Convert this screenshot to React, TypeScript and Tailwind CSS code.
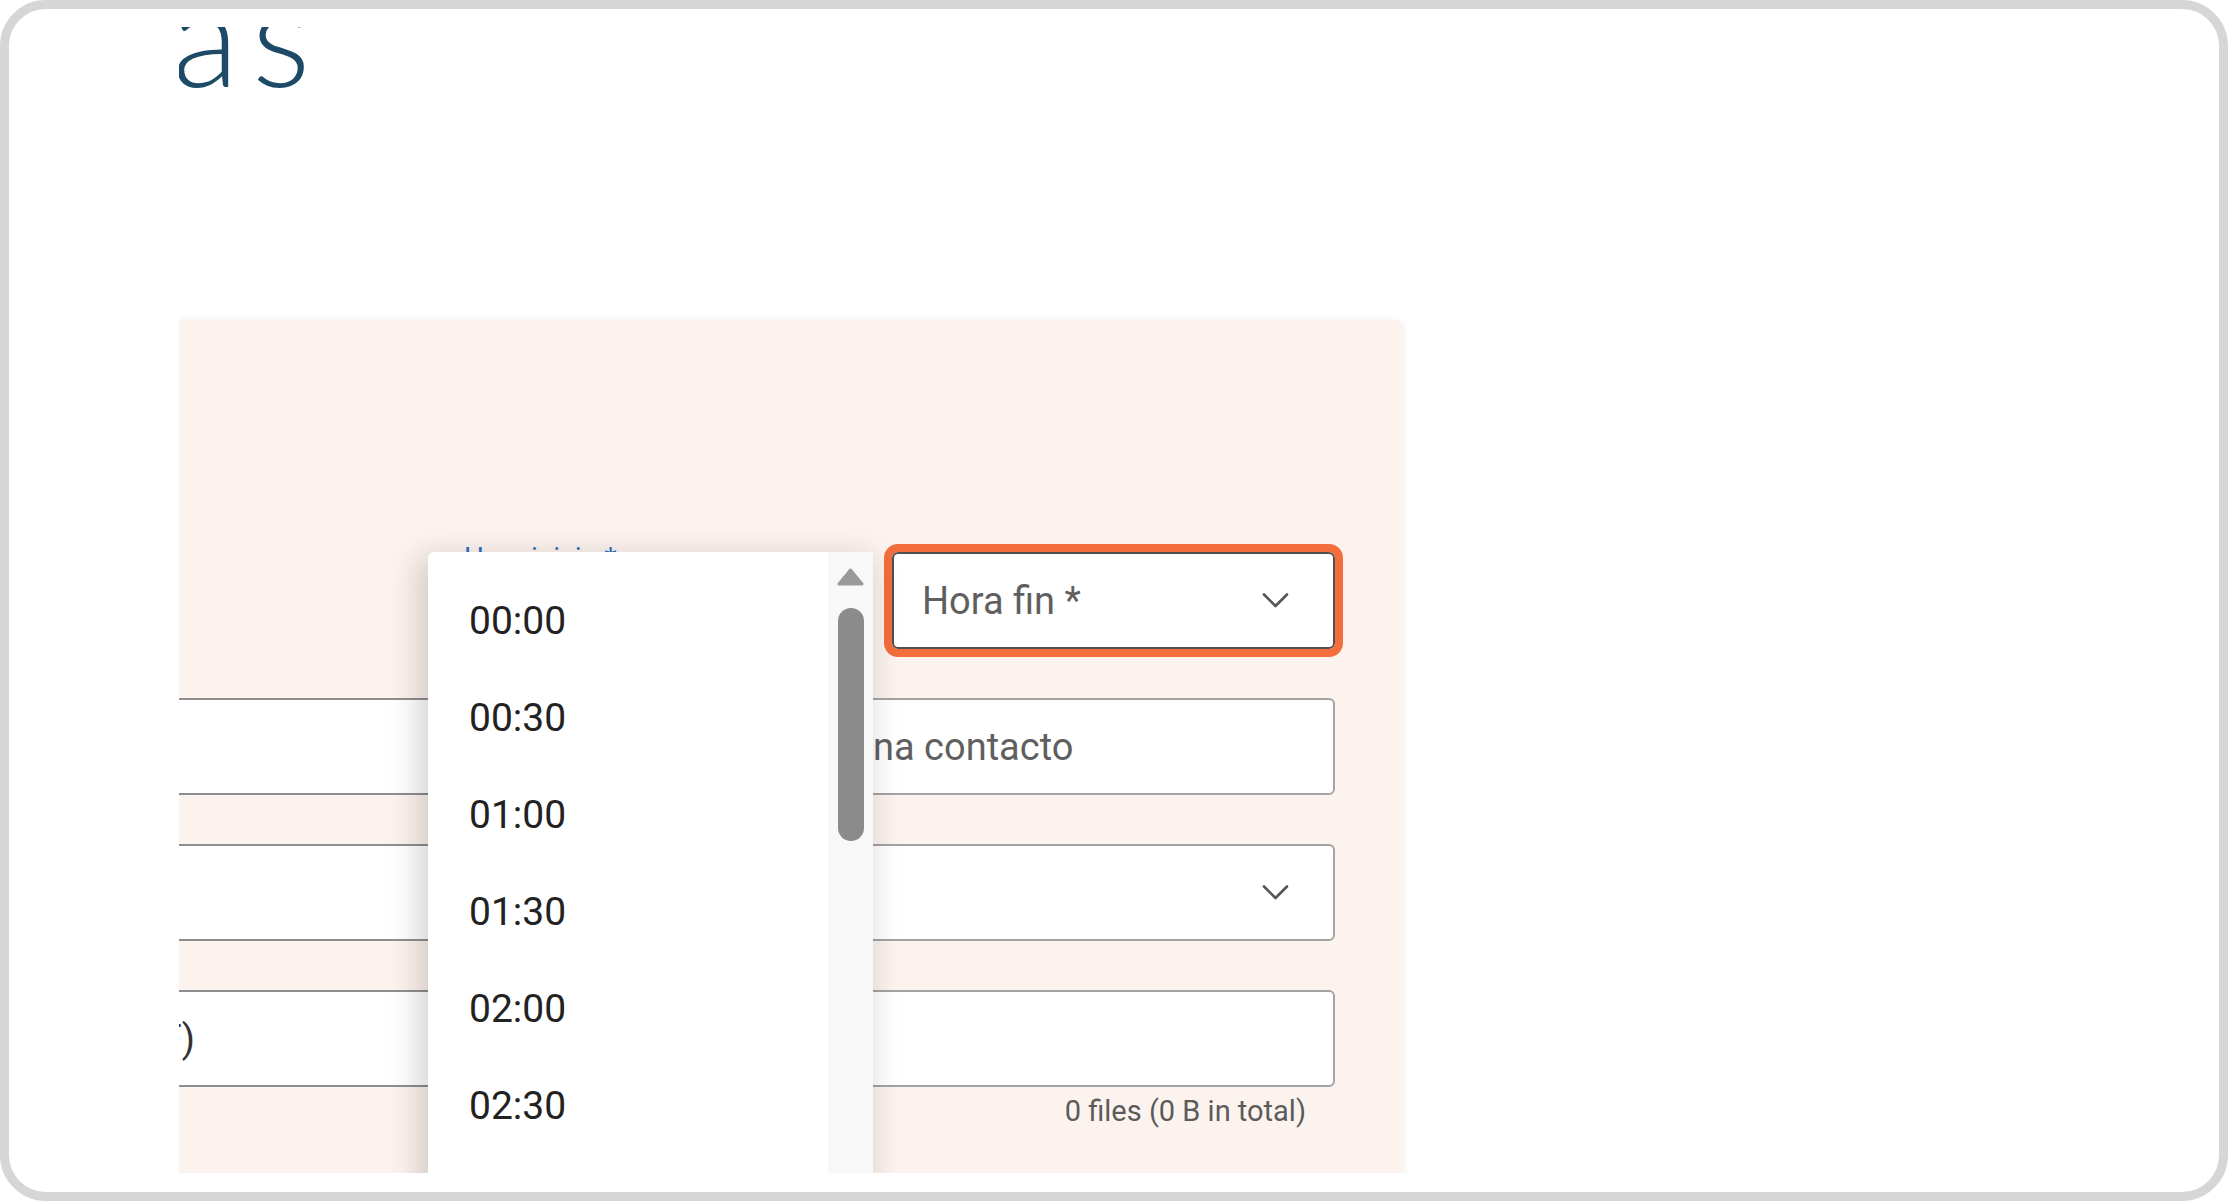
import React from "react";

const Chevron = () => (
  <svg width="27" height="17" viewBox="0 0 27 17" className="shrink-0">
    <polyline points="2,2.5 13.5,14 25,2.5" fill="none" stroke="#555555" strokeWidth="2.6" strokeLinecap="round" strokeLinejoin="round" />
  </svg>
);

const times = ["00:00", "00:30", "01:00", "01:30", "02:00", "02:30"];

export default function App() {
  return (
    <div className="w-[2228px] h-[1201px] bg-white" style={{ fontFamily: "Roboto, 'Liberation Sans', sans-serif" }}>
      <div className="h-full w-full border-[9px] border-[#d6d6d6] rounded-[46px] flex flex-col pt-[18px] pl-[170px] pr-[8px] pb-[19px]">
        <div className="relative flex-1 min-h-0 overflow-hidden">
          {/* heading */}
          <div className="h-[293px] flex flex-col">
            <div
              className="-mt-[62px] ml-[-7px] text-[138px] leading-none font-light text-[#1d4a66] tracking-[13px]"
              style={{ fontFamily: "Lato, 'Open Sans', sans-serif" }}
            >
              as
            </div>
          </div>

          {/* panel */}
          <div className="w-[1225px] h-[900px] bg-[#fdf3ee] rounded-tr-[10px] shadow-[0_0_6px_rgba(0,0,0,0.07)] pt-[232px] pr-[69px] flex flex-col gap-[49px]">
            {/* row 1 */}
            <div className="flex justify-end gap-[22px]">
              <div className="relative w-[422px] h-[97px] bg-white border-2 border-[#9b9b9b] rounded-[6px]">
                <span className="absolute left-[12px] -top-[10px] px-[2px] text-[28px] leading-none text-[#2f6fc4] bg-[#fdf3ee]">
                  Hora inicio *
                </span>
              </div>
              <div className="w-[443px] h-[97px] bg-white border-2 border-[#4f4f4f] rounded-[6px] outline-[8px] outline-solid outline-[#f36d3d] flex items-center pl-[28px] pr-[44px]">
                <span className="flex-1 text-[38px] text-[#5f5f5f] leading-none">Hora fin *</span>
                <Chevron />
              </div>
            </div>

            {/* row 2 */}
            <div className="flex gap-[22px]">
              <div className="-ml-[40px] flex-1 h-[97px] bg-white border-2 border-[#8e8e8e] rounded-[6px]" />
              <div className="w-[587px] h-[97px] bg-white border-2 border-[#a3a3a3] rounded-[6px] flex items-center pl-[25px]">
                <span className="text-[38px] text-[#5f5f5f] leading-none whitespace-nowrap">Persona contacto</span>
              </div>
            </div>

            {/* row 3 */}
            <div className="flex gap-[22px]">
              <div className="-ml-[40px] flex-1 h-[97px] bg-white border-2 border-[#8e8e8e] rounded-[6px]" />
              <div className="w-[587px] h-[97px] bg-white border-2 border-[#a3a3a3] rounded-[6px] flex items-center justify-end pr-[44px]">
                <Chevron />
              </div>
            </div>

            {/* row 4 */}
            <div className="flex flex-col gap-[10px]">
              <div className="flex gap-[22px]">
                <div className="-ml-[40px] flex-1 h-[97px] bg-white border-2 border-[#8e8e8e] rounded-[6px] flex items-center">
                  <div className="w-[54px] shrink-0 flex justify-end">
                    <span className="text-[38px] text-[#333333] leading-none whitespace-nowrap">Adjuntar documentos (PDF)</span>
                  </div>
                </div>
                <div className="w-[587px] h-[97px] bg-white border-2 border-[#a3a3a3] rounded-[6px]" />
              </div>
              <div className="flex justify-end pr-[29px]">
                <span className="text-[29px] leading-none text-[#5b5b5b]">0 files (0 B in total)</span>
              </div>
            </div>
          </div>

          {/* dropdown menu */}
          <div className="absolute left-[249px] top-[525px] w-[445px] h-[700px] bg-white rounded-tl-[6px] shadow-[-6px_8px_30px_4px_rgba(0,0,0,0.17)] flex">
            <div className="flex-1 pt-[21px] flex flex-col">
              {times.map((t) => (
                <div key={t} className="h-[97px] shrink-0 flex items-center pl-[41px] text-[39px] text-[#222222] leading-none">
                  {t}
                </div>
              ))}
            </div>
            <div className="w-[45px] bg-[#f8f8f8] flex flex-col items-center pt-[16px]">
              <svg width="27" height="18" viewBox="0 0 27 18">
                <polygon points="13.5,2 25,16 2,16" fill="#9a9a9a" stroke="#9a9a9a" strokeWidth="3" strokeLinejoin="round" />
              </svg>
              <div className="mt-[22px] w-[26px] h-[233px] rounded-full bg-[#8b8b8b]" />
            </div>
          </div>
        </div>
      </div>
    </div>
  );
}
